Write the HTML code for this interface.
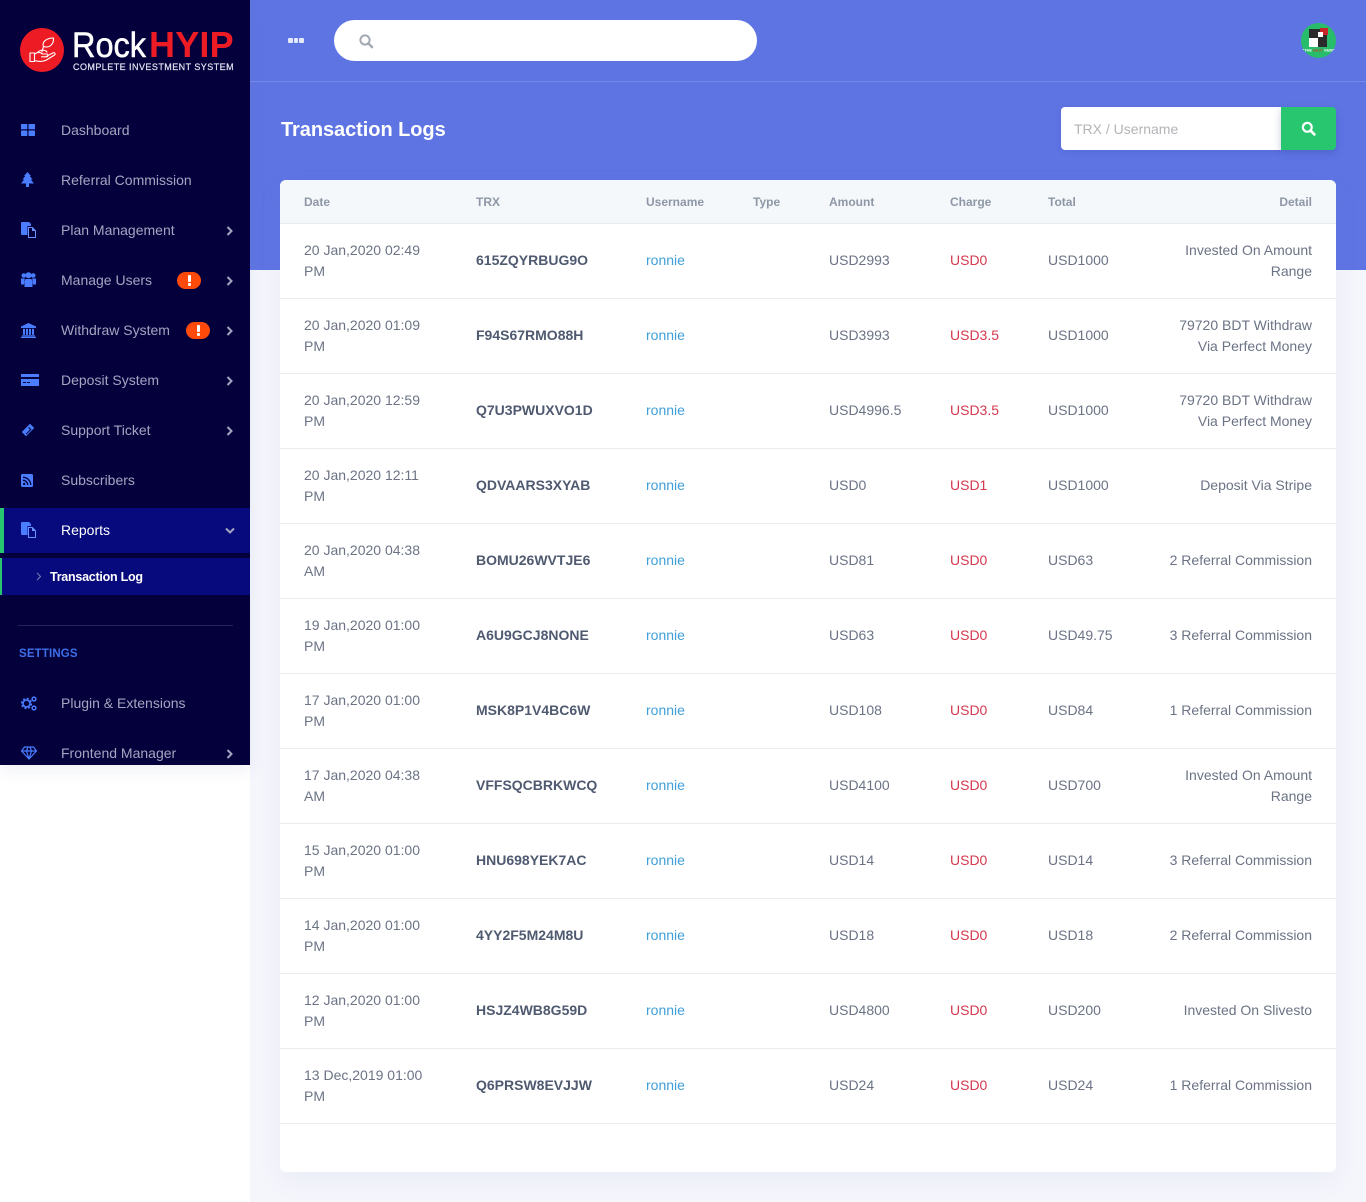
<!DOCTYPE html>
<html lang="en">
<head>
<meta charset="utf-8">
<title>Transaction Logs</title>
<style>
*{box-sizing:border-box;margin:0;padding:0}
html,body{width:1366px;height:1202px;overflow:hidden}
body{position:relative;background:#f5f6fc;font-family:"Liberation Sans",Arial,sans-serif;font-size:14px;color:#6b7385}
.abs{position:absolute}
#leftcol{position:absolute;left:0;top:0;width:250px;height:1202px;background:#fff}
#top{position:absolute;left:250px;top:0;width:1116px;height:270px;background:#5e74e3}
#topline{position:absolute;left:250px;top:81px;width:1116px;height:1px;background:#7388ea}
#side{position:absolute;left:0;top:0;width:250px;height:765px;background:#03003c;overflow:hidden;box-shadow:0 5px 15px rgba(120,130,170,.12)}
.m{position:absolute;left:61px;font-size:14px;line-height:20px;color:#a4a5c0;white-space:nowrap}
.ic{position:absolute}
.ch{position:absolute;left:225px;width:9px;height:10px}
.bdg{position:absolute;width:24px;height:17px;border-radius:9px;background:#ff4a0a}
.bdg:before{content:"";position:absolute;left:10.5px;top:3px;width:3px;height:7px;background:#fff;border-radius:1px}
.bdg:after{content:"";position:absolute;left:10.5px;top:11px;width:3px;height:3px;background:#fff;border-radius:1px}
#card{position:absolute;left:280px;top:180px;width:1056px;height:992px;background:#fff;border-radius:6px;box-shadow:0 8px 24px rgba(120,130,190,.09)}
#head{position:absolute;left:0;top:0;width:1056px;height:44px;background:#f5f8fb;border-bottom:1px solid #e7ebef;border-radius:6px 6px 0 0}
.h{position:absolute;top:14px;font-size:12px;line-height:16px;font-weight:bold;color:#8e97a6;white-space:nowrap}
.r{position:absolute;left:0;width:1056px;height:75px;border-bottom:1px solid #e9ebee}
.c{position:absolute;top:-1px;height:74px;display:flex;align-items:center;line-height:21px;white-space:nowrap;color:#6b7385}
.d{left:24px;top:0}
.t{left:196px;font-weight:bold;color:#4f5a70}
.u{left:366px;color:#3f9fd9}
.a{left:549px}
.x{left:670px;color:#d4394e}
.o{left:768px}
.e{right:24px;text-align:right;justify-content:flex-end}
.w{top:0}
</style>
</head>
<body>
<div id="leftcol"></div>
<div id="top"></div>
<div id="topline"></div>

<!-- top bar -->
<div class="abs" style="left:288px;top:38px;width:4.5px;height:5px;background:#e4e9fb;border-radius:1px"></div>
<div class="abs" style="left:293.5px;top:38px;width:4.5px;height:5px;background:#e4e9fb;border-radius:1px"></div>
<div class="abs" style="left:299px;top:38px;width:4.5px;height:5px;background:#e4e9fb;border-radius:1px"></div>
<div class="abs" style="left:334px;top:20px;width:423px;height:41px;background:#fff;border-radius:21px"></div>
<svg class="abs" style="left:358px;top:33px" width="16" height="16" viewBox="0 0 16 16"><circle cx="7" cy="7" r="4.6" fill="none" stroke="#a4abb5" stroke-width="2"/><path d="M10.5 10.5l3.6 3.6" stroke="#a4abb5" stroke-width="2.4" stroke-linecap="round"/></svg>

<!-- avatar -->
<svg class="abs" style="left:1301px;top:23px" width="35" height="35" viewBox="0 0 35 35">
<circle cx="17.5" cy="17.5" r="17.5" fill="#27bd6b"/>
<rect x="8" y="6" width="18" height="18" fill="#2b2b2b"/>
<rect x="8" y="15" width="9" height="9" fill="#fff"/>
<rect x="19" y="5" width="8" height="7" fill="#c8232c"/>
<rect x="17" y="9" width="5" height="5" fill="#fff"/>
<text x="17.5" y="28.5" text-anchor="middle" font-size="3.8" font-weight="bold" fill="#fff" font-family="Liberation Sans, sans-serif">"THE <tspan fill="#b5562a">BEST</tspan> KEM"</text>
</svg>

<!-- page head -->
<div class="abs" style="left:281px;top:118px;font-size:20px;line-height:24px;font-weight:bold;color:#fff;white-space:nowrap;letter-spacing:-.06px">Transaction Logs</div>
<div class="abs" style="left:1061px;top:107px;width:220px;height:43px;background:#fff;border-radius:4px 0 0 4px;padding-left:13px;line-height:44px;font-size:14px;color:#b4b4b8;box-shadow:0 2px 6px rgba(40,50,130,.12)">TRX / Username</div>
<div class="abs" style="left:1281px;top:107px;width:55px;height:43px;background:#28c76f;border-radius:0 4px 4px 0;box-shadow:0 3px 8px rgba(40,50,130,.25)"></div>
<svg class="abs" style="left:1301px;top:121px" width="15" height="15" viewBox="0 0 15 15"><circle cx="6.3" cy="6.3" r="4.4" fill="none" stroke="#fff" stroke-width="2.2"/><path d="M9.8 9.8l3.6 3.6" stroke="#fff" stroke-width="2.6" stroke-linecap="round"/></svg>

<!-- sidebar -->
<div id="side">
  <svg class="abs" style="left:20px;top:28px" width="44" height="44" viewBox="0 0 44 44">
    <circle cx="22" cy="22" r="22" fill="#ed1c24"/>
    <g fill="none" stroke="#fff" stroke-width="1.1" stroke-linejoin="round" stroke-linecap="round">
      <path d="M10 25h4.500v8.500H10z"/>
      <path d="M14.500 26c3-2 6-2 8 0h4c2 0 2 2.500 0 2.800h-5"/>
      <path d="M14.500 32.500c5 1.500 9 1 12-.5l8-5c1.500-1.200 0-3-1.800-2l-6 3.200"/>
      <path d="M22 24c0-2 1-3 1.500-5.500"/>
      <path d="M23.500 18.500c-2-4.500 3-8.500 10-8.500 .5 6-4 10.500-10 8.500z"/>
      <path d="M18 24c3-2.500 7-2.500 9 0"/>
    </g>
  </svg>
  <div class="abs" style="left:72px;top:24px;font-size:35.5px;line-height:42px;color:#fff;white-space:nowrap;transform:scaleX(.915);transform-origin:0 0;-webkit-text-stroke:.5px #fff">Rock</div>
  <div class="abs" style="left:149px;top:24px;font-size:36px;line-height:42px;font-weight:bold;color:#ed1c24;white-space:nowrap;letter-spacing:.2px">HYIP</div>
  <div class="abs" style="left:73px;top:62px;font-size:9px;line-height:11px;color:#e4e5f2;white-space:nowrap;letter-spacing:.45px;-webkit-text-stroke:.2px #e4e5f2">COMPLETE INVESTMENT SYSTEM</div>

  <!-- active backgrounds -->
  <div class="abs" style="left:0;top:508px;width:250px;height:45px;background:#060a7c;border-left:4px solid #28c76f"></div>
  <div class="abs" style="left:0;top:558px;width:250px;height:37px;background:#060a7c;border-left:2px solid #28c76f"></div>
  <div class="abs" style="left:18px;top:625px;width:215px;height:1px;background:#23245a"></div>

  <!-- icons -->
  <svg class="ic" style="left:21px;top:124px" width="14" height="12" viewBox="0 0 14 12" fill="#4a7dff"><rect width="6.3" height="5.3" rx=".6"/><rect x="7.5" width="6.5" height="5.3" rx=".6"/><rect y="6.5" width="6.3" height="5.5" rx=".6"/><rect x="7.5" y="6.5" width="6.5" height="5.5" rx=".6"/></svg>
  <svg class="ic" style="left:21px;top:172px" width="13" height="15" viewBox="0 0 13 15" fill="#4a7dff"><path d="M6.5 0L10 4H8.800L11.500 7.500H9.800L13 11.500H8V15H5V11.500H0L3.200 7.500H1.500L4.200 4H3z"/></svg>
  <svg class="ic" style="left:21px;top:222px" width="15" height="16" viewBox="0 0 15 16"><path d="M0 1a1 1 0 0 1 1-1h7l2 2v2H6.500v9H1a1 1 0 0 1-1-1z" fill="#4a7dff"/><path d="M7.500 5.500h3.800l3.200 3.200v6.800h-7z" fill="#03003c" stroke="#6b93ff" stroke-width="1"/><path d="M11 5.500v3.500h3.500z" fill="#6b93ff"/></svg>
  <svg class="ic" style="left:21px;top:272px" width="15" height="15" viewBox="0 0 15 15" fill="#4a7dff"><circle cx="2.800" cy="3.500" r="2.300"/><circle cx="12.200" cy="3.500" r="2.300"/><circle cx="7.500" cy="3.300" r="3"/><path d="M0 6.500h3.800L3 12.500H0z"/><path d="M11.200 6.500H15v6h-3z"/><path d="M4.500 7h6l1 3v5h-8v-5z"/></svg>
  <svg class="ic" style="left:21px;top:323px" width="15" height="15" viewBox="0 0 15 15" fill="#4a7dff"><path d="M7.500 0L15 3.500V5H0V3.500z"/><rect x="2" y="5.800" width="2" height="6"/><rect x="5" y="5.800" width="2" height="6"/><rect x="8" y="5.800" width="2" height="6"/><rect x="11" y="5.800" width="2" height="6"/><rect x="1" y="12.300" width="13" height="1.200"/><rect y="13.800" width="15" height="1.200"/></svg>
  <svg class="ic" style="left:21px;top:374px" width="18" height="12" viewBox="0 0 18 12" fill="#4a7dff"><rect width="18" height="3"/><rect y="5" width="18" height="7"/><rect x="2" y="8" width="3" height="1" fill="#03003c"/><rect x="6" y="8" width="3" height="1" fill="#03003c"/></svg>
  <svg class="ic" style="left:21px;top:423px" width="14" height="14" viewBox="0 0 14 14"><path d="M9 .8L13.200 5 5 13.200.8 9z" fill="#4a7dff"/><path d="M7.500 4.200L9.800 6.500 5 11.200" fill="none" stroke="#03003c" stroke-width="1"/></svg>
  <svg class="ic" style="left:21px;top:474px" width="12" height="13" viewBox="0 0 12 13"><rect width="12" height="13" rx="1.500" fill="#4a7dff"/><circle cx="3.200" cy="10" r="1.200" fill="#03003c"/><path d="M2 6.300a4.700 4.700 0 0 1 4.700 4.700M2 3.300A7.700 7.700 0 0 1 9.700 11" fill="none" stroke="#03003c" stroke-width="1.300"/></svg>
  <svg class="ic" style="left:21px;top:522px" width="15" height="16" viewBox="0 0 15 16"><path d="M0 1a1 1 0 0 1 1-1h7l2 2v2H6.500v9H1a1 1 0 0 1-1-1z" fill="#4a7dff"/><path d="M7.500 5.500h3.800l3.200 3.200v6.800h-7z" fill="#060a7c" stroke="#6b93ff" stroke-width="1"/><path d="M11 5.500v3.500h3.500z" fill="#6b93ff"/></svg>
  <svg class="ic" style="left:21px;top:696px" width="16" height="15" viewBox="0 0 16 15" fill="none" stroke="#4a7dff"><circle cx="5.500" cy="7.500" r="3.500" stroke-width="1.600"/><circle cx="5.500" cy="7.500" r="4.800" stroke-width="1.800" stroke-dasharray="2 1.770"/><circle cx="13" cy="3" r="1.900" stroke-width="1.500"/><circle cx="13" cy="12" r="1.900" stroke-width="1.500"/></svg>
  <svg class="ic" style="left:21px;top:746px" width="16" height="14" viewBox="0 0 16 14" fill="none" stroke="#4a7dff" stroke-width="1.200" stroke-linejoin="round"><path d="M3.500 1h9L15.500 5 8 13 .5 5z"/><path d="M.5 5h15M5.500 5L8 13l2.500-8M5.500 5L7 1M10.500 5L9 1"/></svg>

  <!-- labels -->
  <div class="m" style="top:120px">Dashboard</div>
  <div class="m" style="top:170px">Referral Commission</div>
  <div class="m" style="top:220px">Plan Management</div>
  <div class="m" style="top:270px">Manage Users</div>
  <div class="m" style="top:320px">Withdraw System</div>
  <div class="m" style="top:370px">Deposit System</div>
  <div class="m" style="top:420px">Support Ticket</div>
  <div class="m" style="top:470px">Subscribers</div>
  <div class="m" style="top:520px;color:#fff">Reports</div>
  <div class="m" style="left:50px;top:567px;font-size:12.5px;color:#fff;font-weight:bold;letter-spacing:-.25px">Transaction Log</div>
  <div class="m" style="top:693px">Plugin &amp; Extensions</div>
  <div class="m" style="top:743px">Frontend Manager</div>
  <div class="abs" style="left:19px;top:647px;font-size:11.5px;line-height:14px;font-weight:bold;color:#3f6fe8;letter-spacing:.15px">SETTINGS</div>

  <div class="bdg" style="left:177px;top:272px"></div>
  <div class="bdg" style="left:186px;top:322px"></div>

  <!-- chevrons -->
  <svg class="ch" style="top:226px" viewBox="0 0 9 10"><path d="M2.5 1l4 4-4 4" fill="none" stroke="#a4a5c0" stroke-width="2"/></svg>
  <svg class="ch" style="top:276px" viewBox="0 0 9 10"><path d="M2.5 1l4 4-4 4" fill="none" stroke="#a4a5c0" stroke-width="2"/></svg>
  <svg class="ch" style="top:326px" viewBox="0 0 9 10"><path d="M2.5 1l4 4-4 4" fill="none" stroke="#a4a5c0" stroke-width="2"/></svg>
  <svg class="ch" style="top:376px" viewBox="0 0 9 10"><path d="M2.5 1l4 4-4 4" fill="none" stroke="#a4a5c0" stroke-width="2"/></svg>
  <svg class="ch" style="top:426px" viewBox="0 0 9 10"><path d="M2.5 1l4 4-4 4" fill="none" stroke="#a4a5c0" stroke-width="2"/></svg>
  <svg class="ch" style="top:749px" viewBox="0 0 9 10"><path d="M2.5 1l4 4-4 4" fill="none" stroke="#a4a5c0" stroke-width="2"/></svg>
  <svg class="abs" style="left:225px;top:526px" width="10" height="9" viewBox="0 0 10 9"><path d="M1 2.500l4 4 4-4" fill="none" stroke="#a4a5c0" stroke-width="2"/></svg>
  <svg class="abs" style="left:36px;top:572px" width="6" height="9" viewBox="0 0 6 9"><path d="M1 .8l3.500 3.700L1 8.200" fill="none" stroke="#7d80b5" stroke-width="1"/></svg>
</div>

<!-- card -->
<div id="card">
  <div id="head">
    <div class="h" style="left:24px">Date</div>
    <div class="h" style="left:196px">TRX</div>
    <div class="h" style="left:366px">Username</div>
    <div class="h" style="left:473px">Type</div>
    <div class="h" style="left:549px">Amount</div>
    <div class="h" style="left:670px">Charge</div>
    <div class="h" style="left:768px">Total</div>
    <div class="h" style="right:24px">Detail</div>
  </div>

  <div class="r" style="top:44px"><div class="c d">20 Jan,2020 02:49<br>PM</div><div class="c t">615ZQYRBUG9O</div><div class="c u">ronnie</div><div class="c a">USD2993</div><div class="c x">USD0</div><div class="c o">USD1000</div><div class="c e w">Invested On Amount<br>Range</div></div>
  <div class="r" style="top:119px"><div class="c d">20 Jan,2020 01:09<br>PM</div><div class="c t">F94S67RMO88H</div><div class="c u">ronnie</div><div class="c a">USD3993</div><div class="c x">USD3.5</div><div class="c o">USD1000</div><div class="c e w">79720 BDT Withdraw<br>Via Perfect Money</div></div>
  <div class="r" style="top:194px"><div class="c d">20 Jan,2020 12:59<br>PM</div><div class="c t">Q7U3PWUXVO1D</div><div class="c u">ronnie</div><div class="c a">USD4996.5</div><div class="c x">USD3.5</div><div class="c o">USD1000</div><div class="c e w">79720 BDT Withdraw<br>Via Perfect Money</div></div>
  <div class="r" style="top:269px"><div class="c d">20 Jan,2020 12:11<br>PM</div><div class="c t">QDVAARS3XYAB</div><div class="c u">ronnie</div><div class="c a">USD0</div><div class="c x">USD1</div><div class="c o">USD1000</div><div class="c e">Deposit Via Stripe</div></div>
  <div class="r" style="top:344px"><div class="c d">20 Jan,2020 04:38<br>AM</div><div class="c t">BOMU26WVTJE6</div><div class="c u">ronnie</div><div class="c a">USD81</div><div class="c x">USD0</div><div class="c o">USD63</div><div class="c e">2 Referral Commission</div></div>
  <div class="r" style="top:419px"><div class="c d">19 Jan,2020 01:00<br>PM</div><div class="c t">A6U9GCJ8NONE</div><div class="c u">ronnie</div><div class="c a">USD63</div><div class="c x">USD0</div><div class="c o">USD49.75</div><div class="c e">3 Referral Commission</div></div>
  <div class="r" style="top:494px"><div class="c d">17 Jan,2020 01:00<br>PM</div><div class="c t">MSK8P1V4BC6W</div><div class="c u">ronnie</div><div class="c a">USD108</div><div class="c x">USD0</div><div class="c o">USD84</div><div class="c e">1 Referral Commission</div></div>
  <div class="r" style="top:569px"><div class="c d">17 Jan,2020 04:38<br>AM</div><div class="c t">VFFSQCBRKWCQ</div><div class="c u">ronnie</div><div class="c a">USD4100</div><div class="c x">USD0</div><div class="c o">USD700</div><div class="c e w">Invested On Amount<br>Range</div></div>
  <div class="r" style="top:644px"><div class="c d">15 Jan,2020 01:00<br>PM</div><div class="c t">HNU698YEK7AC</div><div class="c u">ronnie</div><div class="c a">USD14</div><div class="c x">USD0</div><div class="c o">USD14</div><div class="c e">3 Referral Commission</div></div>
  <div class="r" style="top:719px"><div class="c d">14 Jan,2020 01:00<br>PM</div><div class="c t">4YY2F5M24M8U</div><div class="c u">ronnie</div><div class="c a">USD18</div><div class="c x">USD0</div><div class="c o">USD18</div><div class="c e">2 Referral Commission</div></div>
  <div class="r" style="top:794px"><div class="c d">12 Jan,2020 01:00<br>PM</div><div class="c t">HSJZ4WB8G59D</div><div class="c u">ronnie</div><div class="c a">USD4800</div><div class="c x">USD0</div><div class="c o">USD200</div><div class="c e">Invested On Slivesto</div></div>
  <div class="r" style="top:869px"><div class="c d">13 Dec,2019 01:00<br>PM</div><div class="c t">Q6PRSW8EVJJW</div><div class="c u">ronnie</div><div class="c a">USD24</div><div class="c x">USD0</div><div class="c o">USD24</div><div class="c e">1 Referral Commission</div></div>
</div>
</body>
</html>
